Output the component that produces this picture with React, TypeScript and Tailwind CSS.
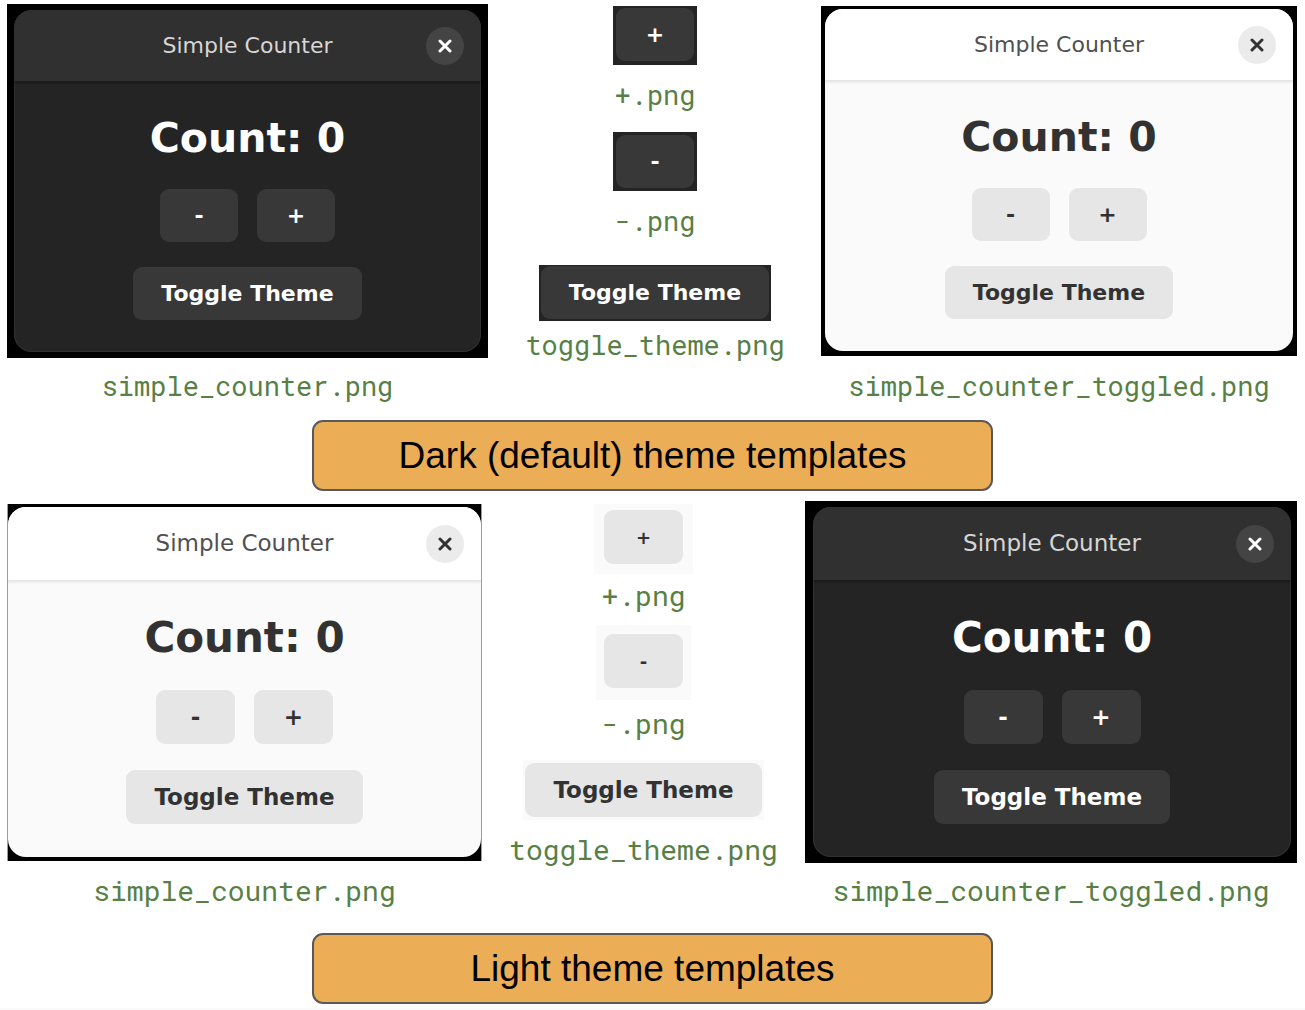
import { useState } from "react";
import type { ReactNode } from "react";
import clsx from "clsx";

type Theme = "dark" | "light";
type Size = "md" | "lg";

const BUTTON_THEME: Record<Theme, string> = {
  dark: "bg-[#383838] text-white",
  light: "bg-[#e6e6e6] text-[#323232]",
};

const BUTTON_SIZE: Record<Size, string> = {
  md: "h-[53px] text-[22px]",
  lg: "h-[54px] text-[23px]",
};

export default function App() {
  return (
    <div className="min-h-screen bg-white font-['DejaVu_Sans',sans-serif]">
      {/* Dark theme */}
      <section>
        <div className="grid grid-cols-[481fr_333fr_476fr] pl-[7px] pr-2">
          <Template name="simple_counter.png" size="md" className="justify-between gap-[10px] pt-1">
            <CounterWindow initialTheme="dark" size="md" className="px-[7px] py-[6px]" />
          </Template>

          <div className="flex flex-col items-center pl-px pt-[6px]">
            <Template name="+.png" size="md" className="gap-3">
              <div className="bg-[#242424] px-[3px] pt-[2px] pb-1">
                <PushButton theme="dark" size="md">+</PushButton>
              </div>
            </Template>
            <Template name="-.png" size="md" className="mt-[19px] gap-3">
              <div className="bg-[#242424] px-[3px] py-[3px]">
                <PushButton theme="dark" size="md">-</PushButton>
              </div>
            </Template>
            <Template name="toggle_theme.png" size="md" className="mt-[26px] gap-[6px]">
              <div className="bg-[#242424] px-[2px] pt-px pb-[2px]">
                <PushButton theme="dark" size="md" wide>Toggle Theme</PushButton>
              </div>
            </Template>
          </div>

          <Template name="simple_counter_toggled.png" size="md" className="justify-between gap-[10px] pt-[6px]">
            <CounterWindow initialTheme="light" size="md" className="px-1 pt-[3px] pb-[5px]" />
          </Template>
        </div>
        <Banner className="mt-4">Dark (default) theme templates</Banner>
      </section>

      {/* Light theme */}
      <section className="mt-[10px] border-b-2 border-[#fafafa] pb-1">
        <div className="grid grid-cols-[475fr_323fr_492fr] pl-[7px] pr-2">
          <Template name="simple_counter.png" size="lg" className="justify-between gap-[10px] pt-[3px]">
            <CounterWindow
              initialTheme="light"
              size="lg"
              className="border-x border-[#9c9c9c] pt-[3px] pb-1"
            />
          </Template>

          <div className="flex flex-col items-center pt-[3px]">
            <Template name="+.png" size="lg" className="gap-1">
              <div className="bg-[#fafafa] px-[10px] pt-[6px] pb-[10px]">
                <PushButton theme="light" size="lg" small>+</PushButton>
              </div>
            </Template>
            <Template name="-.png" size="lg" className="mt-[11px] gap-[6px]">
              <div className="bg-[#fafafa] px-2 pt-[9px] pb-3">
                <PushButton theme="light" size="lg" small>-</PushButton>
              </div>
            </Template>
            <Template name="toggle_theme.png" size="lg" className="mt-[18px] gap-3">
              <div className="bg-[#fafafa] px-[2px] py-[3px]">
                <PushButton theme="light" size="lg" wide>Toggle Theme</PushButton>
              </div>
            </Template>
          </div>

          <Template name="simple_counter_toggled.png" size="lg" className="justify-between gap-[10px]">
            <CounterWindow initialTheme="dark" size="lg" className="pl-2 pr-[6px] py-[6px]" />
          </Template>
        </div>
        <Banner className="mt-6">Light theme templates</Banner>
      </section>
    </div>
  );
}

function Template({
  name,
  size,
  className,
  children,
}: {
  name: string;
  size: Size;
  className?: string;
  children: ReactNode;
}) {
  return (
    <figure className={clsx("flex flex-col", className)}>
      <div className="flex flex-col">
        {name.startsWith("simple") ? children : <div className="self-center">{children}</div>}
      </div>
      <figcaption
        className={clsx(
          "text-center leading-[36px] text-[#587f45] font-['Roboto_Mono','DejaVu_Sans_Mono',monospace]",
          size === "md" ? "text-[27px]" : "text-[28px]",
        )}
      >
        {name}
      </figcaption>
    </figure>
  );
}

function CounterWindow({
  initialTheme,
  size,
  className,
}: {
  initialTheme: Theme;
  size: Size;
  className?: string;
}) {
  const [theme, setTheme] = useState<Theme>(initialTheme);
  const [count, setCount] = useState(0);
  const dark = theme === "dark";
  const large = size === "lg";

  return (
    <div className={clsx("bg-black", className)}>
      <div
        className={clsx(
          "overflow-hidden rounded-[18px]",
          dark ? "bg-[#242424] text-white" : "bg-[#fafafa] text-[#323232]",
          dark && "ring-1 ring-inset ring-[#303030]",
        )}
      >
        <header
          className={clsx(
            "grid grid-cols-[1fr_auto_1fr] items-center px-[17px]",
            large ? "h-[73px]" : "h-[71px]",
            dark
              ? "bg-[#303030] shadow-[0_1px_3px_1px_rgba(0,0,0,0.3)]"
              : "bg-white shadow-[0_1px_3px_1px_rgba(0,0,0,0.1)]",
          )}
        >
          <h2
            className={clsx(
              "col-start-2",
              large ? "text-[23px]" : "text-[22px]",
              dark ? "text-[#d6d6d6]" : "text-[#505050]",
            )}
          >
            Simple Counter
          </h2>
          <button
            type="button"
            aria-label="Close"
            className={clsx(
              "flex size-[38px] items-center justify-center justify-self-end rounded-full",
              dark ? "bg-[#444444]" : "bg-[#ebebeb]",
            )}
          >
            <svg className="size-[14px]" viewBox="0 0 14 14" fill="none" stroke="currentColor" strokeWidth={3}>
              <path strokeLinecap="round" d="M2 2l10 10M12 2L2 12" />
            </svg>
          </button>
        </header>

        <div
          className={clsx(
            "flex flex-col items-center",
            large ? "gap-[26px] pt-8 pb-[33px]" : "gap-[25px] py-8",
          )}
        >
          <p
            className={clsx(
              "font-bold",
              large ? "text-[42px] leading-[52px]" : "text-[41px] leading-[51px]",
            )}
          >
            Count: {count}
          </p>
          <div className="flex gap-[19px]">
            <PushButton theme={theme} size={size} onClick={() => setCount(count - 1)}>-</PushButton>
            <PushButton theme={theme} size={size} onClick={() => setCount(count + 1)}>+</PushButton>
          </div>
          <PushButton theme={theme} size={size} wide onClick={() => setTheme(dark ? "light" : "dark")}>
            Toggle Theme
          </PushButton>
        </div>
      </div>
    </div>
  );
}

function PushButton({
  theme,
  size,
  wide,
  small,
  onClick,
  children,
}: {
  theme: Theme;
  size: Size;
  wide?: boolean;
  small?: boolean;
  onClick?: () => void;
  children: ReactNode;
}) {
  return (
    <button
      type="button"
      onClick={onClick}
      className={clsx(
        "block rounded-[9px] font-bold",
        BUTTON_THEME[theme],
        small ? "h-[54px] text-[18px]" : BUTTON_SIZE[size],
        wide ? "px-7" : size === "lg" ? "w-[79px]" : "w-[78px]",
      )}
    >
      {children}
    </button>
  );
}

function Banner({ className, children }: { className?: string; children: ReactNode }) {
  return (
    <h1
      className={clsx(
        "mx-auto flex h-[71px] w-full max-w-[681px] items-center justify-center rounded-[11px] border-2 border-[#595959] bg-[#ebad56] text-[37px] text-black font-['Liberation_Sans',sans-serif]",
        className,
      )}
    >
      {children}
    </h1>
  );
}
